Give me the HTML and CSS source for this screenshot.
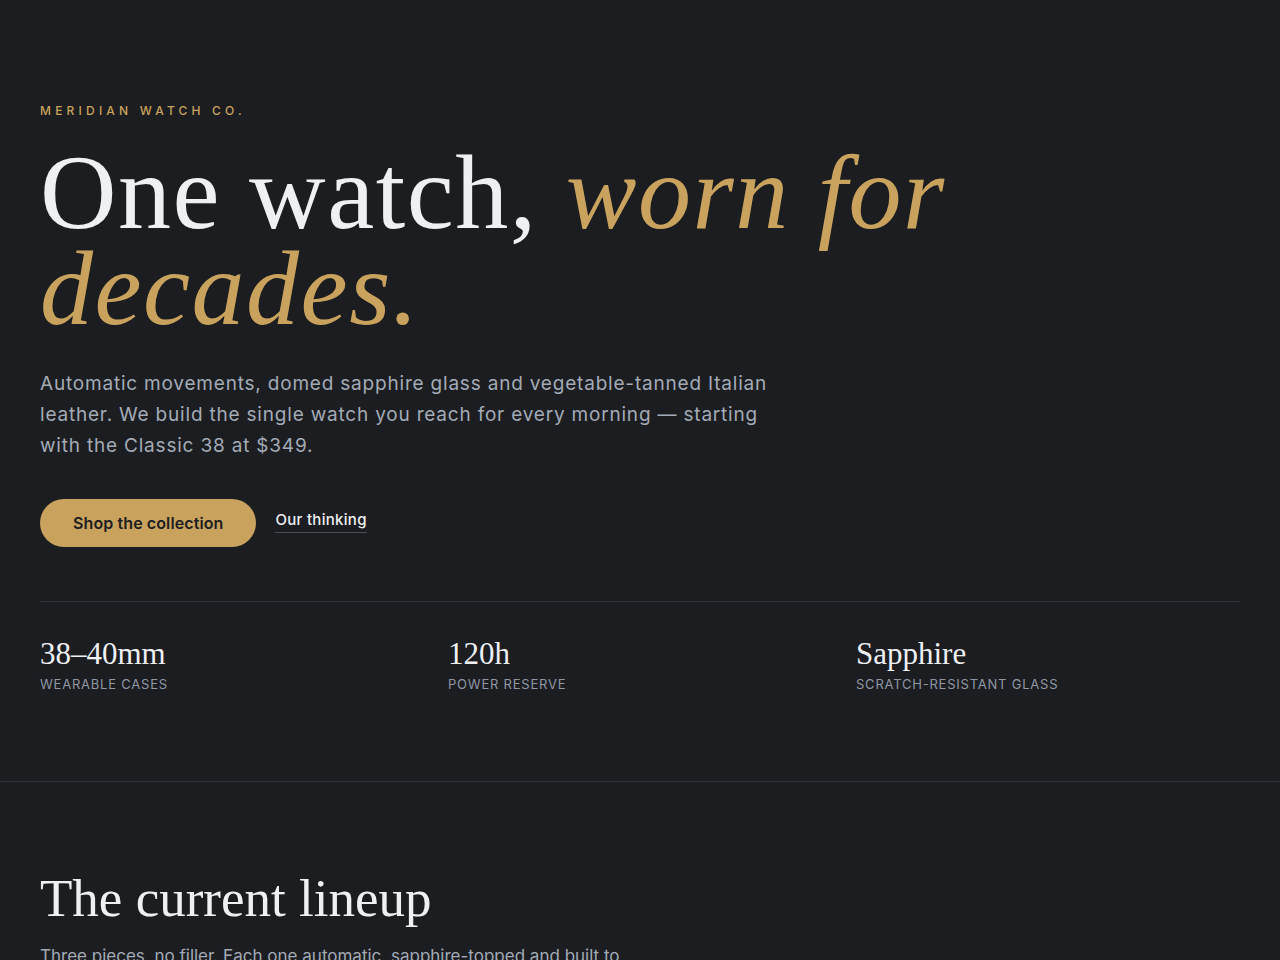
FILE: index.html
```html
<!DOCTYPE html>
<html lang="en">
<head>
<meta charset="utf-8">
<title>Meridian Watch Co.</title>
<link rel="stylesheet" href="styles.css">
</head>
<body>
<section class="hero">
  <p class="eyebrow">Meridian Watch Co.</p>
  <h1 class="headline">One watch, <em>worn for decades.</em></h1>
  <p class="lede">Automatic movements, domed sapphire glass and vegetable-tanned Italian leather. We build the single watch you reach for every morning — starting with the Classic 38 at $349.</p>
  <div class="actions">
    <a class="btn-primary" href="#">Shop the collection</a>
    <a class="link" href="#">Our thinking</a>
  </div>
  <div class="stats">
    <div class="stat">
      <div class="stat-value">38–40mm</div>
      <div class="stat-label">Wearable cases</div>
    </div>
    <div class="stat">
      <div class="stat-value">120h</div>
      <div class="stat-label">Power reserve</div>
    </div>
    <div class="stat">
      <div class="stat-value">Sapphire</div>
      <div class="stat-label">Scratch-resistant glass</div>
    </div>
  </div>
</section>
<section class="lineup">
  <h2 class="section-title">The current lineup</h2>
  <p class="section-lede">Three pieces, no filler. Each one automatic, sapphire-topped and built to last a lifetime of daily wear.</p>
</section>
</body>
</html>
```
FILE: styles.css
```css
* { box-sizing: border-box; }

html, body {
  margin: 0;
  background: #1c1d21;
  color: #eef0f3;
  font-family: Inter, "Noto Sans", sans-serif;
}

.hero {
  padding: 103px 40px 89px;
  border-bottom: 1px solid #2e3036;
}

.eyebrow {
  margin: 0;
  font-size: 12px;
  letter-spacing: 0.35em;
  text-transform: uppercase;
  color: #c9a35d;
  font-weight: 500;
}

.headline {
  margin: 27px 0 0;
  font-family: "Liberation Serif", "DejaVu Serif", serif;
  font-weight: 400;
  font-size: 106px;
  line-height: 96px;
  letter-spacing: 1.5px;
  max-width: 1000px;
  color: #eef0f3;
}

.headline em {
  color: #c9a35d;
  font-style: italic;
}

.lede {
  margin: 31px 0 0;
  max-width: 740px;
  font-size: 19px;
  line-height: 31px;
  letter-spacing: 0.8px;
  color: #a3abb6;
}

.actions {
  margin-top: 38px;
  display: flex;
  align-items: center;
  gap: 19px;
}

.btn-primary {
  display: inline-flex;
  align-items: center;
  height: 48px;
  padding: 0 33px;
  border-radius: 999px;
  background: #c9a35d;
  color: #1c1d21;
  font-weight: 600;
  font-size: 16px;
  letter-spacing: 0.1px;
  text-decoration: none;
}

.link {
  color: #eef0f3;
  font-size: 15px;
  font-weight: 500;
  letter-spacing: 0.3px;
  text-decoration: none;
  padding-bottom: 3px;
  border-bottom: 1px solid #4a4d55;
  margin-top: -4px;
}

.stats {
  margin-top: 54px;
  padding-top: 34px;
  border-top: 1px solid #2e3036;
  display: grid;
  grid-template-columns: repeat(3, 1fr);
  gap: 24px;
}

.stat-value {
  font-family: "Liberation Serif", "DejaVu Serif", serif;
  font-size: 31px;
  line-height: 36px;
  color: #eef0f3;
}

.stat-label {
  margin-top: 4px;
  font-size: 13px;
  letter-spacing: 0.06em;
  text-transform: uppercase;
  color: #8f97a3;
}

.lineup {
  padding: 86px 40px 80px;
}

.section-title {
  margin: 0;
  font-family: "Liberation Serif", "DejaVu Serif", serif;
  font-weight: 400;
  font-size: 53px;
  line-height: 60px;
  color: #eef0f3;
}

.section-lede {
  margin: 14px 0 0;
  max-width: 600px;
  font-size: 17px;
  line-height: 28px;
  letter-spacing: 0;
  color: #a3abb6;
}
```
